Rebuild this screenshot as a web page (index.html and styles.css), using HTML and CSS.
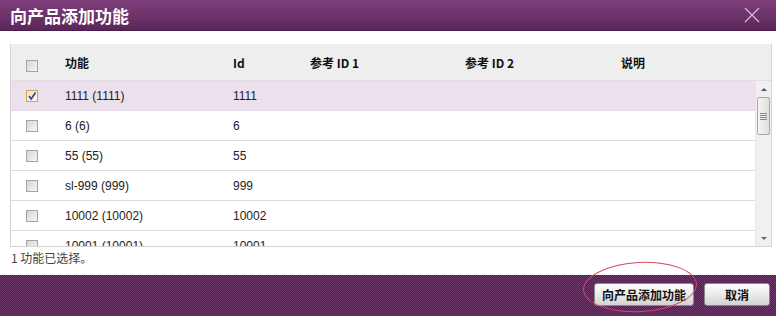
FILE: index.html
```html
<!DOCTYPE html>
<html lang="zh">
<head>
    <meta charset="UTF-8">
    <title>向产品添加功能</title>
    <link rel="stylesheet" href="styles.css">
</head>
<body>
    <div class="dialog">
        <div class="titlebar">
            <span class="title">向产品添加功能</span>
            <svg class="close" width="16" height="16" viewBox="0 0 16 16">
                <path d="M1 1 L15 15 M15 1 L1 15" stroke="#d8bcd6" stroke-width="1.3" fill="none"/>
            </svg>
        </div>

        <div class="content">
            <div class="grid-box">
                <div class="row head">
                    <span class="cb"></span>
                    <span>功能</span>
                    <span>Id</span>
                    <span>参考 ID 1</span>
                    <span>参考 ID 2</span>
                    <span>说明</span>
                </div>
                <div class="body">
                    <div class="rows">
                        <div class="row selected">
                            <span class="cb checked">
                                <svg width="10" height="10" viewBox="0 0 10 10"><path d="M2 5 L4.2 8 L8.5 1.5" stroke="#2b4fa8" stroke-width="1.8" fill="none"/></svg>
                            </span>
                            <span>1111 (1111)</span><span>1111</span><span></span><span></span><span></span>
                        </div>
                        <div class="row"><span class="cb"></span><span>6 (6)</span><span>6</span><span></span><span></span><span></span></div>
                        <div class="row"><span class="cb"></span><span>55 (55)</span><span>55</span><span></span><span></span><span></span></div>
                        <div class="row"><span class="cb"></span><span>sl-999 (999)</span><span>999</span><span></span><span></span><span></span></div>
                        <div class="row"><span class="cb"></span><span>10002 (10002)</span><span>10002</span><span></span><span></span><span></span></div>
                        <div class="row"><span class="cb"></span><span>10001 (10001)</span><span>10001</span><span></span><span></span><span></span></div>
                    </div>
                    <div class="scrollbar">
                        <span class="arrow up"></span>
                        <div class="track">
                            <div class="thumb"><span class="grip"></span></div>
                        </div>
                        <span class="arrow down"></span>
                    </div>
                </div>
            </div>
            <p class="status">1 功能已选择。</p>
        </div>

        <div class="footer">
            <button class="btn add">向产品添加功能</button>
            <button class="btn cancel">取消</button>
            <span class="circle"></span>
        </div>
    </div>
</body>
</html>
```

FILE: styles.css
```css
body {
    margin: 0;
    background: #fff;
    font-family: "Liberation Sans", Arial, "Noto Sans CJK SC", sans-serif;
    font-size: 12px;
    color: #222;
}

.dialog {
    width: 776px;
    height: 316px;
    display: flex;
    flex-direction: column;
    position: relative;
    overflow: hidden;
}

.titlebar {
    height: 30px;
    flex: none;
    display: flex;
    align-items: center;
    justify-content: space-between;
    padding: 0 10px 0 10px;
    background: linear-gradient(#7e3f7c, #6a3068 60%, #5a2658);
    border-bottom: 1px solid #4a1e48;
}

.title {
    color: #fff;
    font-family: "Noto Sans CJK SC", sans-serif;
    font-size: 17px;
    font-weight: bold;
}

.close {
    margin-right: 6px;
}

.content {
    padding: 13px 4px 0 10px;
}

.grid-box {
    border: 1px solid #d4d4d4;
    border-top: none;
    height: 202px;
    display: flex;
    flex-direction: column;
    overflow: hidden;
}

.row {
    display: grid;
    grid-template-columns: 54px 168px 77px 155px 156px 1fr;
    align-items: center;
    height: 29px;
    border-bottom: 1px solid #dcdcdc;
    white-space: nowrap;
}

.row.head {
    height: 36px;
    background: #eeeeee;
    border-bottom: 1px solid #e4dbe4;
    font-weight: bold;
    color: #111;
}

.row.head span {
    font-family: "Noto Sans CJK SC", sans-serif;
    font-size: 12px;
}

.row.head .cb {
    margin-top: 8px;
}

.body {
    flex: 1;
    display: flex;
    min-height: 0;
}

.rows {
    flex: 1;
    overflow: hidden;
}

.row.selected {
    background: #ebe0ec;
    border-bottom-color: #e6dce6;
}

.cb {
    display: block;
    width: 10px;
    height: 10px;
    border: 1px solid #a4a4a4;
    background: linear-gradient(135deg, #d6d6d6, #f6f6f6);
    margin-left: 15px;
}

.cb.checked {
    border-color: #d2a255;
    background: linear-gradient(135deg, #f6e3bf, #fdf6e8);
    display: flex;
    align-items: center;
    justify-content: center;
}

.scrollbar {
    width: 15px;
    flex: none;
    display: flex;
    flex-direction: column;
    background: #f0f0f0;
    border-left: 1px solid #e6e6e6;
}

.arrow {
    height: 16px;
    flex: none;
    display: flex;
    align-items: center;
    justify-content: center;
}

.arrow::after {
    content: "";
    border-left: 3px solid transparent;
    border-right: 3px solid transparent;
}

.arrow.up::after {
    border-bottom: 3px solid #555;
}

.arrow.down::after {
    border-top: 3px solid #666;
}

.track {
    flex: 1;
}

.thumb {
    height: 36px;
    margin: 0 1px;
    border: 1px solid #a9a9a9;
    border-radius: 2px;
    background: linear-gradient(90deg, #f4f4f4, #dedede);
    display: flex;
    align-items: center;
    justify-content: center;
}

.grip {
    width: 7px;
    height: 7px;
    background: repeating-linear-gradient(#888 0 1px, transparent 1px 2px);
}

.status {
    margin: 3px 0 0 1px;
    color: #444;
    font-family: "Noto Sans CJK SC", sans-serif;
    font-size: 12px;
    line-height: 15px;
}

.footer {
    margin-top: auto;
    height: 39px;
    flex: none;
    display: flex;
    justify-content: flex-end;
    align-items: center;
    gap: 10px;
    padding: 0 6px 2px 0;
    background: repeating-conic-gradient(#6d3a6b 0 25%, #4e1f4c 0 50%) 0 0 / 2px 2px;
    position: relative;
}

.btn {
    height: 23px;
    padding: 0 4px;
    border: 1px solid #8a8a8a;
    border-radius: 3px;
    background: linear-gradient(#ffffff, #e8e8e8 55%, #d2d2d2);
    font-family: "Noto Sans CJK SC", sans-serif;
    font-weight: bold;
    font-size: 12px;
    color: #111;
}

.btn.add {
    width: 100px;
}

.btn.cancel {
    width: 66px;
}

.circle {
    position: absolute;
    left: 583px;
    top: -13px;
    width: 112px;
    height: 48px;
    border: 1px solid #d94a5a;
    border-radius: 50%;
    transform: rotate(-3deg);
    pointer-events: none;
}
```
